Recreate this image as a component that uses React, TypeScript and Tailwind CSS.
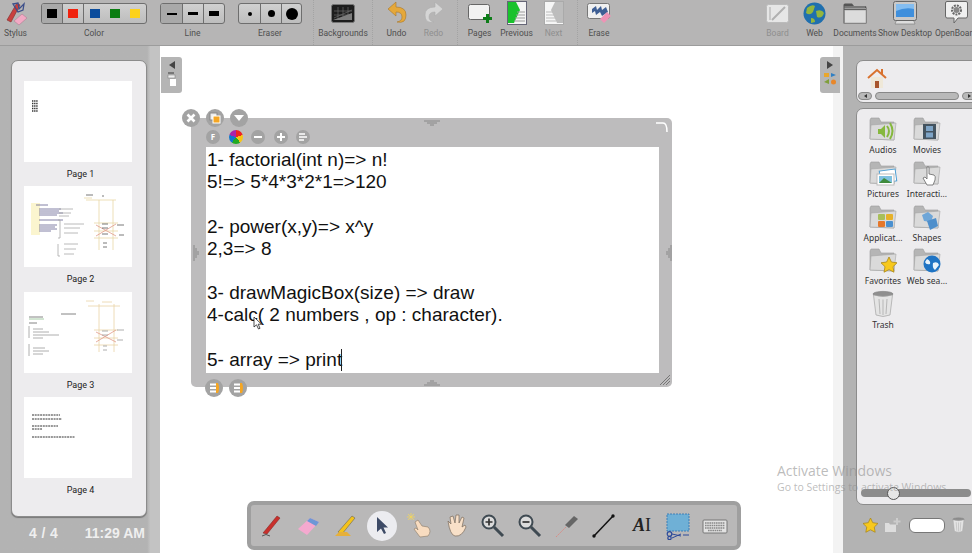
import React from "react";

const Tool = ({ w, label, dim, children }: { w: string; label: string; dim?: boolean; children: React.ReactNode }) => (
  <div className={`${w} flex h-full shrink-0 flex-col items-center`}>
    <div className="flex h-[26px] items-center justify-center">{children}</div>
    <span className={`mt-[2px] whitespace-nowrap font-['Roboto',sans-serif] text-[8.5px] leading-[11px] ${dim ? "text-[#8f8f8f]" : "text-[#4f4f4f]"}`}>{label}</span>
  </div>
);

const Group = ({ w, label, children }: { w: string; label: string; children: React.ReactNode }) => (
  <div className={`${w} flex shrink-0 flex-col items-center pt-[3px]`}>
    <div className="flex h-[21px] w-full overflow-hidden rounded-[3px] border border-[#6e6e6e] bg-gradient-to-b from-[#d0d0d0] to-[#bdbdbd]">{children}</div>
    <span className="mt-[4px] font-['Roboto',sans-serif] text-[8.5px] leading-[11px] text-[#4f4f4f]">{label}</span>
  </div>
);

const Seg = ({ w, on, last, children }: { w: string; on?: boolean; last?: boolean; children: React.ReactNode }) => (
  <div className={`${w} flex items-center justify-center ${last ? "" : "border-r border-[#6e6e6e]"} ${on ? "bg-[#a9a9a9]" : ""}`}>{children}</div>
);

const Folder = ({ children }: { children?: React.ReactNode }) => (
  <svg className="block" width="30" height="28" viewBox="0 0 30 28">
    <path d="M2 5 L2 24 L26 25 L26 7 L13 7 L11 3 L3 3 Z" fill="#b5b5b5" stroke="#9a9a9a" strokeWidth=".6" />
    <path d="M3 10 L28 8 L26 25 L2 24 Z" fill="#dadada" stroke="#a5a5a5" strokeWidth=".6" />
    {children}
  </svg>
);

const Star = ({ s = 1, x = 0, y = 0 }: { s?: number; x?: number; y?: number }) => (
  <path transform={`translate(${x} ${y}) scale(${s})`} d="M8 0 L10.4 5 L16 5.8 L12 9.7 L13 15.2 L8 12.6 L3 15.2 L4 9.7 L0 5.8 L5.6 5 Z" fill="#f7c81c" stroke="#a98718" strokeWidth=".8" />
);

const Trash = ({ w = 22, h = 28 }: { w?: number; h?: number }) => (
  <svg className="block" width={w} height={h} viewBox="0 0 22 28">
    <ellipse cx="11" cy="4" rx="10" ry="2.6" fill="#8f8f8f" stroke="#777" strokeWidth=".6" />
    <path d="M1.5 5 L4 25 Q11 28 18 25 L20.5 5 Q11 8 1.5 5 Z" fill="#e4e4e4" stroke="#a3a3a3" strokeWidth=".7" />
    <path d="M7 9 L8 24 M11 9.5 V25 M15 9 L14 24" stroke="#b6b6b6" strokeWidth="1" />
  </svg>
);

const library: [string, React.ReactNode][] = [
  ["Audios", <><path d="M10 14 H13 L17 10 V23 L13 19 H10 Z" fill="#86b83e" /><path d="M19 11 Q23 16 19 22 M22 8 Q27 16 22 24" fill="none" stroke="#86b83e" strokeWidth="2" /></>],
  ["Movies", <><rect x="11" y="9" width="13" height="15" fill="#44535f" /><rect x="14" y="11" width="7" height="5" fill="#7ea4c6" /><rect x="14" y="17.5" width="7" height="5" fill="#7ea4c6" /></>],
  ["Pictures", <><rect x="12" y="11" width="16" height="12" fill="#fff" stroke="#4d9fd4" transform="rotate(-8 20 17)" /><rect x="9" y="15" width="17" height="11" fill="#fff" stroke="#bbb" /><rect x="11" y="17" width="13" height="7" fill="#7fc1e0" /><path d="M11 24 L16 19 L24 24 Z" fill="#3f8b3d" /></>],
  ["Interacti...", <path d="M15 8 Q17 7 17 9 V15 L22 16 Q24 17 23 21 L21 26 H15 L11 19 L13 18 L15 20 Z" fill="#fff" stroke="#666" strokeWidth=".8" />],
  ["Applicat...", <><rect x="10" y="11" width="7" height="6" rx="1" fill="#a8bf5a" /><rect x="18" y="11" width="7" height="6" rx="1" fill="#e6b12a" /><rect x="10" y="18" width="7" height="6" rx="1" fill="#e5772a" /><rect x="18" y="18" width="7" height="6" rx="1" fill="#4a90d0" /></>],
  ["Shapes", <><path d="M10 12 L16 9 L21 13 L19 19 L12 18 Z" fill="#6ea6d8" /><path d="M15 18 L24 15 L26 23 L18 27 Z" fill="#4f8fcb" /></>],
  ["Favorites", <Star x={13} y={11} />],
  ["Web sea...", <><circle cx="20" cy="18" r="8.5" fill="#1f74c4" /><path d="M15 13 Q19 15 18 18 Q14 19 13 16 Z M21 17 Q26 15 27 19 L23 24 Q20 22 21 17 Z" fill="#e8f3fb" /></>],
];

const Tb = ({ children }: { children: React.ReactNode }) => (
  <div className="flex h-[36px] w-[37px] shrink-0 items-center justify-center">
    <svg width="28" height="28" viewBox="0 0 28 28">{children}</svg>
  </div>
);

const Round = ({ children, size = "w-[18px] h-[18px]" }: { children: React.ReactNode; size?: string }) => (
  <div className={`${size} flex items-center justify-center rounded-full bg-[#a3a3a3]`}>{children}</div>
);

const Lines = () => (
  <svg width="10" height="10" viewBox="0 0 10 10"><path d="M1 2 H7 M1 5 H9 M1 8 H6" stroke="#fff" strokeWidth="1.6" /></svg>
);

const Bars = () => (
  <svg width="14" height="14" viewBox="0 0 14 14">
    <path d="M9 2 H11 Q13 7 11 12 H9 Z" fill="#f5a623" />
    <path d="M3 3.5 H9 M3 7 H9 M3 10.5 H9" stroke="#fff" strokeWidth="1.8" />
  </svg>
);

const Thumb = ({ n }: { n: number }) => {
  const scribbles: Record<number, React.ReactNode> = {
    1: <path d="M8 20 h6 M8 22.5 h6 M8 25 h6 M8 27.5 h6 M8 30 h6" stroke="#333" strokeWidth="1.3" strokeDasharray="1.4 .7" />,
    2: (
      <g strokeWidth=".8" fill="none">
        <rect x="7" y="17" width="9" height="32" fill="#fbf5cf" />
        <path d="M12 19 h12 M15 23 h22 M15 25 h20 M15 27 h24 M15 29 h18 M15 34 h24 M15 39 h18 M15 41 h16 M15 43 h18 M15 45 h12" stroke="#62618f" />
        <path d="M35 23 h14 M35 27 h12 M35 30 h10 M34 34 h2 v18 h-2 M40 38 h20 M40 42 h16 M40 47 h14 M34 58 v12 h2 M40 58 h14 M40 63 h12 M40 68 h10" stroke="#a8a8a8" />
        <path d="M60 12 h8 M62 14 h30 M75 14 v50 M89 14 v50 M70 37 h24 M70 45 h24 M70 52 h24" stroke="#e9d7a5" />
        <path d="M72 39 L92 50 M72 50 L92 38" stroke="#e19a8c" />
        <path d="M62 9 h7 M78 10 h2 M78 38 h6 M78 42 h6 M78 48 h6 M79 57 h4 M79 61 h4 M93 39 h7 M95 49 h5" stroke="#555" />
      </g>
    ),
    3: (
      <g strokeWidth=".8" fill="none">
        <path d="M62 9 h8 M78 10 h10 M64 14 h32 M75 12 v48 M90 12 v48 M70 38 h24 M70 46 h24 M70 53 h24" stroke="#ead3a6" />
        <path d="M72 40 L92 50 M72 50 L92 38" stroke="#e19a8c" />
        <path d="M37 22 h15 M5 25 h14 M5 31 h8" stroke="#666" />
        <path d="M5 27 h15" stroke="#8fbf8f" />
        <path d="M5 34 v12 M9 37 h10 M9 40 h16 M9 43 h26 M9 46 h10 M5 52 v12 M9 56 h12 M9 59 h16 M9 62 h10 M78 39 h6 M78 43 h6 M79 54 h4 M79 58 h4 M93 38 h7 M93 48 h6" stroke="#999" />
      </g>
    ),
    4: (
      <g fill="none" strokeWidth="1">
        <path d="M8 18 h28 M8 22 h30 M8 29 h26 M8 32 h10 M8 40 h43" stroke="#333" strokeDasharray="2 .7" />
      </g>
    ),
  };
  return (
    <div className="flex h-[105.3px] flex-col items-center">
      <svg className="block shrink-0" width="108" height="81" viewBox="0 0 108 81"><rect width="108" height="81" fill="#fff" />{scribbles[n]}</svg>
      <span className="ml-[5px] mt-[6px] font-['Roboto',sans-serif] text-[9px] leading-[12px] text-[#222]">Page {n}</span>
    </div>
  );
};

const text = [
  "1- factorial(int n)=> n!",
  "5!=> 5*4*3*2*1=>120",
  "",
  "2- power(x,y)=> x^y",
  "2,3=> 8",
  "",
  "3- drawMagicBox(size) => draw",
  "4-calc( 2 numbers , op : character).",
  "",
];

export default function App() {
  return (
    <div className="flex h-[553px] w-[972px] flex-col overflow-hidden bg-white font-['Noto_Sans',sans-serif]">
      {/* top bar */}
      <div className="flex h-[46px] shrink-0 overflow-hidden border-b border-[#9c9c9c] bg-[#b6b5b5]">
        <Tool w="w-[31px]" label="Stylus">
          <svg width="24" height="25" viewBox="0 0 24 25">
            <path d="M3 19 L13 2 L16 4 L7 21 Z" fill="#c9403e" stroke="#7f2a2a" strokeWidth=".6" />
            <path d="M9 3 L14 2 L15 8 L20 3 L19 9 L14 11 Z" fill="none" stroke="#3d4f8a" strokeWidth="1.3" />
            <path d="M10 20 L18 13 L23 17 L15 24 Z" fill="#f2a9c4" stroke="#a8758a" strokeWidth=".5" />
          </svg>
        </Tool>
        <div className="ml-[10px] flex gap-[13px]">
          <Group w="w-[106px]" label="Color">
            <Seg w="w-[21px]" on><i className="h-[9px] w-[10px] bg-black" /></Seg>
            <Seg w="w-[21px]"><i className="h-[9px] w-[10px] bg-[#f0220e]" /></Seg>
            <div className="flex flex-1 items-center justify-around px-[1px]">
              <i className="h-[9px] w-[10px] bg-[#0b4c9c]" />
              <i className="h-[9px] w-[10px] bg-[#0b7d12]" />
              <i className="h-[9px] w-[10px] bg-[#fdd21c]" />
            </div>
          </Group>
          <Group w="w-[65px]" label="Line">
            <Seg w="w-[22px]" on><i className="h-[2px] w-[10px] bg-black" /></Seg>
            <Seg w="w-[21px]"><i className="h-[3px] w-[10px] bg-black" /></Seg>
            <Seg w="flex-1" last><i className="h-[5px] w-[10px] bg-black" /></Seg>
          </Group>
          <Group w="w-[64px]" label="Eraser">
            <Seg w="w-[22px]"><i className="h-[4px] w-[4px] rounded-full bg-black" /></Seg>
            <Seg w="w-[21px]"><i className="h-[7px] w-[7px] rounded-full bg-black" /></Seg>
            <Seg w="flex-1" last><i className="h-[12px] w-[12px] rounded-full bg-black" /></Seg>
          </Group>
        </div>
        <div className="ml-[11px] flex h-full w-[60px] shrink-0 border-x border-dotted border-[#a3a3a3]">
          <Tool w="w-full" label="Backgrounds">
            <svg width="24" height="19" viewBox="0 0 24 19">
              <rect x=".5" y=".5" width="23" height="18" rx="2" fill="#1d1d1d" stroke="#777" />
              <path d="M3 14 L21 6 M3 11 H21 M3 7 H21 M7 3 V16 M12 3 V16 M17 3 V16" stroke="#6a6a6a" strokeWidth=".7" />
              <path d="M2 16 L21 9 V16 Z" fill="#7d7d7d" />
            </svg>
          </Tool>
        </div>
        <div className="flex h-full shrink-0 border-r border-dotted border-[#a3a3a3] px-[5px]">
          <Tool w="w-[37px]" label="Undo">
            <svg width="20" height="24" viewBox="0 0 20 24">
              <path d="M9 1 L1 8 L9 15 V11 Q15 11 15 16 Q15 20 10 21 Q19 23 19 14 Q19 6 9 6 Z" fill="#e5a83a" stroke="#a8772c" strokeWidth=".6" />
            </svg>
          </Tool>
          <Tool w="w-[37px]" label="Redo" dim>
            <svg width="20" height="24" viewBox="0 0 20 24">
              <path d="M11 1 L19 8 L11 15 V11 Q5 11 5 16 Q5 20 10 21 Q1 23 1 14 Q1 6 11 6 Z" fill="#d5d5d5" stroke="#adadad" strokeWidth=".6" />
            </svg>
          </Tool>
        </div>
        <div className="flex h-full shrink-0 border-r border-dotted border-[#a3a3a3] pl-[3px] pr-[5px]">
          <Tool w="w-[37px]" label="Pages">
            <svg width="24" height="22" viewBox="0 0 24 22">
              <rect x=".5" y="2.5" width="21" height="15" rx="2" fill="#f2f2f2" stroke="#666" />
              <path d="M15 15 H18 V12 H21 V15 H24 V18 H21 V21 H18 V18 H15 Z" fill="#0d7d18" />
            </svg>
          </Tool>
          <Tool w="w-[37px]" label="Previous">
            <svg width="20" height="24" viewBox="0 0 20 24">
              <rect x=".5" y=".5" width="19" height="23" fill="#f4f4f4" stroke="#667" />
              <path d="M1 1 H9 L13 9 L7 22 H1 Z" fill="#19c22c" />
              <path d="M10 11 H18 M9 14 H18 M8 17 H18 M7 20 H18" stroke="#9a9a9a" />
            </svg>
          </Tool>
          <Tool w="w-[37px]" label="Next" dim>
            <svg width="20" height="24" viewBox="0 0 20 24">
              <rect x=".5" y=".5" width="19" height="23" fill="#f6f6f6" stroke="#aaa" />
              <path d="M19 1 H11 L7 9 L13 22 H19 Z" fill="#bdbdbd" />
              <path d="M2 11 H9 M2 14 H10 M2 17 H11 M2 20 H12" stroke="#bbb" />
            </svg>
          </Tool>
        </div>
        <Tool w="w-[42px]" label="Erase">
          <svg width="24" height="22" viewBox="0 0 24 22">
            <rect x=".5" y="1.5" width="22" height="15" rx="2" fill="#f0f0f0" stroke="#777" />
            <path d="M5 7 L9 4 L10 8 L14 4 L15 8 L19 5 L21 10 L15 14 L13 10 L9 13 L8 9 L5 11 Z" fill="#3f5f94" />
            <path d="M13 17 L20 10 L24 14 L17 21 Z" fill="#ee93b5" />
          </svg>
        </Tool>
        <div className="ml-[139px] flex h-full shrink-0">
          <Tool w="w-[37px]" label="Board" dim>
            <svg width="23" height="19" viewBox="0 0 23 19">
              <rect x=".5" y=".5" width="22" height="18" rx="2" fill="#e6e6e6" stroke="#bbb" />
              <path d="M6 16 L19 3" stroke="#b0b0b0" strokeWidth="2" />
              <path d="M4 3 V16" stroke="#c8c8c8" strokeWidth="2" />
            </svg>
          </Tool>
          <Tool w="w-[37px]" label="Web">
            <svg width="23" height="23" viewBox="0 0 23 23">
              <circle cx="11.5" cy="11.5" r="11" fill="#1f6fae" />
              <path d="M4 6 Q9 2 12 4 L10 10 Q7 14 3 11 Z M13 9 Q19 7 21 11 Q19 17 14 15 Z M8 16 Q12 16 12 20 L8 21 Z" fill="#93b53e" />
            </svg>
          </Tool>
          <Tool w="w-[44px]" label="Documents">
            <svg width="24" height="21" viewBox="0 0 24 21">
              <path d="M.5 2 Q.5 .5 2 .5 H9 L11 3 H22 Q23.5 3 23.5 5 V20.5 H.5 Z" fill="#555" />
              <path d="M1.5 7 H23 V20 H1.5 Z" fill="#dcdcdc" stroke="#888" strokeWidth=".5" />
              <path d="M1.5 4 H22 M1.5 5.5 H23" stroke="#bbb" strokeWidth=".7" />
            </svg>
          </Tool>
          <Tool w="w-[56px]" label="Show Desktop">
            <svg width="24" height="24" viewBox="0 0 24 24">
              <path d="M4 18 L2 23 H22 L20 18 Z" fill="#ddd" stroke="#777" strokeWidth=".6" />
              <rect x=".5" y=".5" width="23" height="19" rx="2" fill="#c9c9c9" stroke="#666" />
              <rect x="3" y="3" width="18" height="13" fill="#3f8fdc" />
              <path d="M3 3 H21 V8 Q12 6 3 10 Z" fill="#84bdf0" />
            </svg>
          </Tool>
          <Tool w="w-[46px]" label="OpenBoard">
            <svg width="23" height="24" viewBox="0 0 23 24">
              <path d="M2 .5 H21 Q22.5 .5 22.5 2 V15 Q22.5 17 21 17 H13 L9 22 V17 H2 Q.5 17 .5 15 V2 Q.5 .5 2 .5 Z" fill="#efefef" stroke="#666" />
              <circle cx="11.5" cy="9" r="4.5" fill="none" stroke="#666" strokeWidth="2" strokeDasharray="2 1" />
              <circle cx="11.5" cy="9" r="3" fill="#888" />
            </svg>
          </Tool>
        </div>
      </div>

      {/* body */}
      <div className="flex min-h-0 flex-1">
        {/* left */}
        <div className="flex w-[160px] shrink-0 bg-gradient-to-r from-[#b3b3b3] from-[92%] to-[#c3c3c3] to-[94%]">
          <div className="flex w-[149px] flex-col pl-[11px] pr-[2px] pt-[14px]">
            <div className="flex h-[457px] flex-col items-center rounded-[7px] border border-[#8c8c8c] bg-[#edecee] pr-[2px] pt-[20px] shadow-[0_1px_1px_#777]">
              {[1, 2, 3, 4].map((n) => <Thumb key={n} n={n} />)}
            </div>
            <div className="mt-[6px] flex items-center justify-between pl-[18px] pr-[2px] font-['Liberation_Sans',sans-serif] text-[14px] font-bold text-[#efefef]">
              <span className="tracking-[0.4px]">4 / 4</span>
              <span>11:29 AM</span>
            </div>
          </div>
        </div>

        {/* center */}
        <div className="relative min-w-0 flex-1 bg-white">
          <div className="absolute left-[1px] top-[11px] flex h-[36px] w-[21px] flex-col items-center gap-[3px] rounded-br-[3px] rounded-tr-[3px] bg-[#b5b5b5] pt-[4px]">
            <svg width="8" height="8" viewBox="0 0 8 8"><path d="M7 0 V8 L1 4 Z" fill="#444" /></svg>
            <svg width="10" height="14" viewBox="0 0 10 14"><rect x="1" y="0" width="6" height="2" fill="#777" /><rect x="1" y="3" width="7" height="3" fill="#eee" stroke="#777" strokeWidth=".5" /><rect x="3" y="7" width="6" height="7" fill="#fff" /></svg>
          </div>

          <div className="absolute inset-y-0 right-0 w-[10px] bg-[#f3f3f3]" />

          <div className="absolute right-[3px] top-[11px] flex h-[36px] w-[20px] flex-col items-center gap-[3px] rounded-bl-[3px] rounded-tl-[3px] bg-[#b5b5b5] pt-[4px]">
            <svg width="8" height="8" viewBox="0 0 8 8"><path d="M1 0 V8 L7 4 Z" fill="#444" /></svg>
            <svg width="14" height="14" viewBox="0 0 14 14"><rect x="1" y="1" width="5" height="4" fill="#e9a72c" /><path d="M8 1 L13 3 L8 5 Z" fill="#2f7fc4" /><path d="M1 10 L6 7 V12 Z" fill="#7f9f3a" /><circle cx="10.5" cy="10" r="2.5" fill="#e8872a" /></svg>
          </div>

          {/* widget */}
          <div className="absolute left-[31px] top-[72px] w-[481px] rounded-[5px] bg-[#bdbcbd] pb-[14px] pl-[15px] pr-[13px]">
            <div className="flex h-[29px] items-center gap-[8.5px] pt-[9px]">
              <Round size="w-[14px] h-[14px]"><span className="text-[8px] font-bold leading-none text-white">F</span></Round>
              <div className="h-[14px] w-[14px] rounded-full bg-[conic-gradient(#e22_0_20%,#f5c518_20%_40%,#2a2_40%_60%,#17c_60%_80%,#a2a_80%_100%)]" />
              <Round size="w-[14px] h-[14px]"><i className="h-[2px] w-[8px] bg-white" /></Round>
              <Round size="w-[14px] h-[14px]"><svg width="8" height="8" viewBox="0 0 8 8"><path d="M4 0 V8 M0 4 H8" stroke="#fff" strokeWidth="2" /></svg></Round>
              <Round size="w-[14px] h-[14px]"><Lines /></Round>
            </div>
            <div className="h-[226px] bg-white pl-[1px] pt-[2px] font-['Liberation_Sans',sans-serif] text-[19px] leading-[22.2px] text-[#111]">
              {text.map((t, i) => <div key={i} className="h-[22.2px] whitespace-pre">{t}</div>)}
              <div className="flex h-[22.2px]"><span>5- array =&gt; print</span><i className="ml-[-1px] h-[22px] w-[1px] bg-[#222]" /></div>
            </div>

            <div className="absolute left-[-9px] top-[-9px] flex gap-[6px]">
              <Round><svg width="10" height="10" viewBox="0 0 10 10"><path d="M1.5 1.5 L8.5 8.5 M8.5 1.5 L1.5 8.5" stroke="#fff" strokeWidth="2.6" /></svg></Round>
              <Round><svg width="12" height="12" viewBox="0 0 12 12"><rect x="1" y="1" width="7" height="7" fill="#eee" stroke="#888" /><rect x="4" y="4" width="7" height="7" fill="#f5a623" stroke="#fff" /></svg></Round>
              <Round><svg width="12" height="8" viewBox="0 0 12 8"><path d="M1 1 H11 L6 7 Z" fill="#fff" /></svg></Round>
            </div>
            <div className="absolute bottom-[-10px] left-[14px] flex gap-[6px]">
              <Round><Bars /></Round>
              <Round><Bars /></Round>
            </div>
            {/* handles */}
            <svg className="absolute left-[233px] top-[2px]" width="16" height="7" viewBox="0 0 16 7"><path d="M0 1 H16 M3 3 H13 M6 5 H10" stroke="#888" /></svg>
            <svg className="absolute bottom-[1px] left-[233px]" width="16" height="7" viewBox="0 0 16 7"><path d="M0 6 H16 M3 4 H13 M6 2 H10" stroke="#888" /></svg>
            <svg className="absolute left-[2px] top-[127px]" width="7" height="16" viewBox="0 0 7 16"><path d="M1 0 V16 M3 3 V13 M5 6 V10" stroke="#888" /></svg>
            <svg className="absolute right-[0px] top-[127px]" width="7" height="16" viewBox="0 0 7 16"><path d="M6 0 V16 M4 3 V13 M2 6 V10" stroke="#888" /></svg>
            <svg className="absolute right-[3px] top-[3px]" width="14" height="12" viewBox="0 0 14 12"><path d="M1 2 H8 Q12 2 12 11" fill="none" stroke="#fff" strokeWidth="1.5" /></svg>
            <svg className="absolute bottom-[1px] right-[1px]" width="12" height="12" viewBox="0 0 12 12"><path d="M1 11 L11 1 M4 11 L11 4 M7 11 L11 7" stroke="#777" /></svg>
          </div>

          {/* pointer */}
          <svg className="absolute left-[93px] top-[270px]" width="10" height="14" viewBox="0 0 10 14"><path d="M1 1 V11 L3.5 8.8 L5.5 13 L7 12.3 L5.2 8.2 H8.5 Z" fill="#fff" stroke="#222" strokeWidth=".8" /></svg>

          {/* floating toolbar */}
          <div className="absolute left-[87px] top-[455px] flex h-[49px] w-[494px] items-center rounded-[7px] border-[4px] border-[#9f9f9f] bg-[#b9b8b8] pl-[1px]">
            <Tb><path d="M6 21 L20 4 L23 6 L10 22 Z" fill="#c9302c" stroke="#7a1f1d" strokeWidth=".5" /><path d="M5 24 Q9 21 13 24" fill="none" stroke="#555" /></Tb>
            <Tb><path d="M4 17 L16 6 L25 10 L13 23 Z" fill="#f4a9cf" /><path d="M16 6 L25 10 L22 14 L13 9 Z" fill="#6d97d6" /></Tb>
            <Tb><path d="M7 20 L21 4 L24 6 L11 22 Z" fill="#f4c31c" stroke="#555" strokeWidth=".5" /><path d="M4 24 H20 L16 20 H8 Z" fill="#e6b03a" /></Tb>
            <div className="flex w-[37px] shrink-0 justify-center">
              <div className="flex h-[30px] w-[30px] items-center justify-center rounded-full bg-[#ececf0]">
                <svg width="14" height="20" viewBox="0 0 14 20"><path d="M2 1 V16 L6 12.5 L9 18 L11 17 L8.5 11.5 H13 Z" fill="#3d4a66" /></svg>
              </div>
            </div>
            <Tb><path d="M10 10 L13 8 L17 14 L23 15 Q27 19 23 24 L15 25 L9 17 L11 16 L13 18 Z" fill="#f8dcc0" stroke="#8b7a66" strokeWidth=".6" /><path d="M6 1 V8 M2 5 H10 M3 2 L9 8 M9 2 L3 8" stroke="#f3d55c" strokeWidth=".8" /></Tb>
            <Tb><path d="M6 9 L9 12 L8 5 L11 4 L13 11 L14 3 L17 3 L17 11 L20 5 L22 6 L20 15 L23 13 L24 15 Q20 25 13 24 Q8 23 6 9 Z" fill="#f8e0c8" stroke="#7b6c5c" strokeWidth=".7" /></Tb>
            <Tb><circle cx="10" cy="10" r="6.5" fill="#dcdcdc" stroke="#3f4a52" strokeWidth="2" /><path d="M15 15 L24 24" stroke="#3f4a52" strokeWidth="3" /><path d="M6.5 10 H13.5 M10 6.5 V13.5" stroke="#333" strokeWidth="1.7" /></Tb>
            <Tb><circle cx="10" cy="10" r="6.5" fill="#dcdcdc" stroke="#3f4a52" strokeWidth="2" /><path d="M15 15 L24 24" stroke="#3f4a52" strokeWidth="3" /><path d="M6.5 10 H13.5" stroke="#333" strokeWidth="1.7" /></Tb>
            <Tb><path d="M12 13 L21 4 L25 7 L16 16 Z" fill="#666" /><path d="M3 25 L13 15" stroke="#d98c85" strokeWidth="1" strokeDasharray="2 1" /></Tb>
            <Tb><path d="M4 24 L23 4" stroke="#111" strokeWidth="1.5" /><circle cx="4" cy="24" r="1.7" fill="#111" /><circle cx="23" cy="4" r="1.7" fill="#111" /></Tb>
            <div className="flex w-[37px] shrink-0 items-center justify-center pl-[3px] font-['Liberation_Serif',serif] text-[18px] font-bold italic text-[#222]">A<span className="not-italic font-normal">I</span></div>
            <Tb><rect x="3" y="2" width="22" height="17" fill="#6fb0d6" stroke="#3f7fb5" strokeDasharray="2 1" /><circle cx="5.5" cy="22" r="2.3" fill="none" stroke="#2c4a9a" strokeWidth="1.2" /><circle cx="5.5" cy="26" r="1.7" fill="none" stroke="#2c4a9a" strokeWidth="1.2" /><path d="M8 22 L17 24 M8 26 L17 22 M19 23 H25" stroke="#2c4a9a" strokeWidth="1" /></Tb>
            <Tb><rect x="2" y="8" width="24" height="13" rx="1" fill="#e2e2e2" stroke="#777" /><path d="M4 11 H24 M4 13.5 H24 M4 16 H24 M7 18.5 H21" stroke="#888" strokeWidth="1.4" strokeDasharray="1.6 .6" /></Tb>
          </div>
        </div>

        {/* right */}
        <div className="flex w-[129px] shrink-0 flex-col overflow-hidden bg-[#b3b3b3] pl-[13px] pt-[14px]">
          <div className="h-[43px] w-[130px] shrink-0 rounded-[7px] border border-[#8c8c8c] bg-[#edecee] pl-[1px] pt-[7px]">
            <svg className="ml-[9px] block" width="20" height="20" viewBox="0 0 20 20">
              <path d="M4 9 H16 V20 H4 Z" fill="#efe8d8" />
              <rect x="8" y="13" width="4" height="7" fill="#a8552c" />
              <path d="M1 10 L10 2 L19 10" fill="none" stroke="#d9722f" strokeWidth="2" />
              <rect x="14" y="1" width="2" height="5" fill="#d9722f" />
            </svg>
            <div className="mt-[3px] flex h-[9px] items-center gap-[3px] pr-[2px] text-[#555]">
              <div className="flex h-[8px] w-[14px] items-center justify-center rounded-full border border-[#888] bg-[#b9b9b9]"><i className="h-0 w-0 border-y-[2px] border-r-[3px] border-y-transparent border-r-[#333]" /></div>
              <div className="h-[8px] w-[84px] rounded-full border border-[#888] bg-[#b9b9b9]" />
              <div className="flex h-[8px] w-[14px] items-center justify-center rounded-full border border-[#888] bg-[#b9b9b9]"><i className="h-0 w-0 border-y-[2px] border-l-[3px] border-y-transparent border-l-[#333]" /></div>
            </div>
          </div>
          <div className="mt-[5px] flex h-[397px] w-[130px] shrink-0 flex-col rounded-[7px] border border-[#8c8c8c] bg-[#edecee] pl-[4px] pt-[6px]">
            <div className="grid w-[88px] grid-cols-2 auto-rows-[43.75px]">
              {library.map(([name, icon]) => (
                <div key={name} className="flex flex-col items-center">
                  <Folder>{icon}</Folder>
                  <span className="mt-[1px] whitespace-nowrap text-[8.5px] leading-[12px] text-[#333]">{name}</span>
                </div>
              ))}
              <div className="flex flex-col items-center">
                <div className="flex h-[28px] items-center"><Trash /></div>
                <span className="mt-[1px] text-[8.5px] leading-[12px] text-[#333]">Trash</span>
              </div>
            </div>
            <div className="mt-auto mb-[7px] flex h-[8px] w-[110px] items-center rounded-full bg-[#8c8c8c] pl-[26px]">
              <div className="h-[13px] w-[13px] rounded-full border border-[#555] bg-[#e6e6e6]" />
            </div>
          </div>
          <div className="mt-[12px] flex items-center">
            <svg className="ml-[7px]" width="15" height="15" viewBox="0 0 16 16"><Star /></svg>
            <svg className="ml-[7px]" width="16" height="15" viewBox="0 0 16 15"><path d="M0 5 H4 L5 6.5 H11 V14 H0 Z" fill="#ddd" /><path d="M12 0 V7 M8.5 3.5 H15.5" stroke="#ccc" strokeWidth="2" /></svg>
            <div className="ml-[8px] h-[15px] w-[36px] rounded-[6px] border border-[#777] bg-white" />
            <div className="ml-[7px]"><Trash w={13} h={16} /></div>
          </div>
        </div>
      </div>

      {/* watermark */}
      <div className="pointer-events-none absolute left-[777px] top-[462px] font-['Open_Sans',sans-serif] text-[#8f8f8f]/60">
        <div className="text-[14px] leading-[18px]">Activate Windows</div>
        <div className="text-[10.5px] leading-[14px]">Go to Settings to activate Windows.</div>
      </div>
    </div>
  );
}
